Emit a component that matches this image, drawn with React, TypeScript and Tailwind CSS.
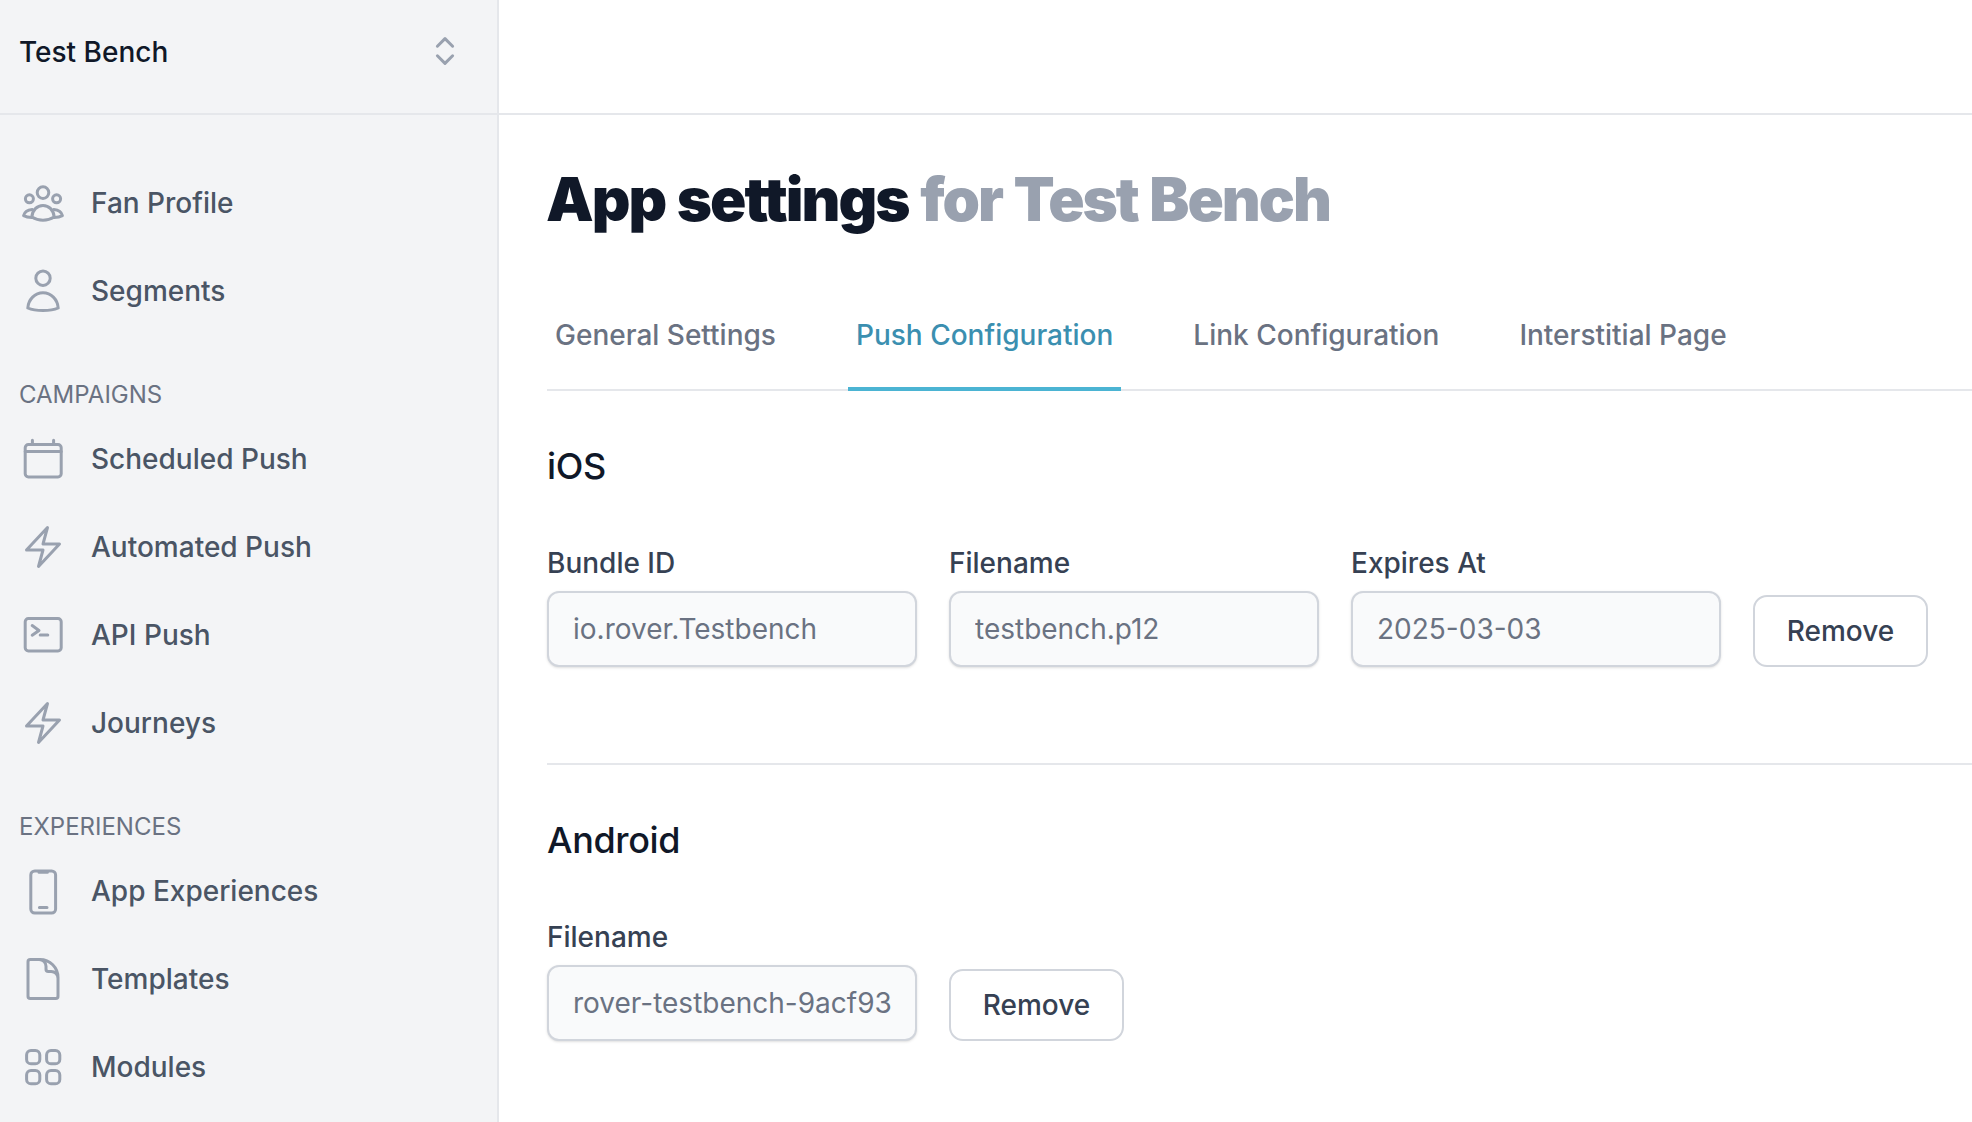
import type { ReactNode } from 'react'

function Icon({ children }: { children: ReactNode }) {
  return (
    <svg viewBox="0 0 24 24" fill="none" stroke="currentColor" strokeWidth={1.5} strokeLinecap="round" strokeLinejoin="round" className="w-12 h-12 text-gray-400 shrink-0">
      {children}
    </svg>
  )
}

const BOLT = <path d="M3.75 13.5l10.5-11.25L12 10.5h8.25L9.75 21.75 12 13.5H3.75z" />

const ICONS: Record<string, ReactNode> = {
  fans: (
    <>
      <circle cx="12" cy="6.8" r="2.9" />
      <circle cx="5.2" cy="9.9" r="2" />
      <circle cx="18.8" cy="9.9" r="2" />
      <path d="M12 13.2c-3 0-5.3 2.4-5.6 5.8 1.6 1 3.5 1.6 5.6 1.6s4-.6 5.6-1.6c-.3-3.4-2.6-5.8-5.6-5.8z" />
      <path d="M6.6 15.2c-2.2.2-3.9 1.3-4.3 3.1.9.5 2.3.9 4.1.9M17.4 15.2c2.2.2 3.9 1.3 4.3 3.1-.9.5-2.3.9-4.1.9" />
    </>
  ),
  user: (
    <>
      <circle cx="12" cy="5.6" r="3.6" />
      <path d="M12 12.9c-4 0-7.3 3.3-7.6 7.6 2.2 1 4.8 1.3 7.6 1.3s5.4-.3 7.6-1.3c-.3-4.3-3.6-7.6-7.6-7.6z" />
    </>
  ),
  calendar: (
    <>
      <rect x="3.1" y="4.8" width="18" height="16.2" rx="1.6" />
      <path d="M3.1 8.3h18M6.7 2.6v2.2M17.3 2.6v2.2" />
    </>
  ),
  bolt: BOLT,
  terminal: (
    <>
      <rect x="3.1" y="3.8" width="18" height="16.2" rx="1.6" />
      <path d="M6.6 7.3l3.4 2.4-3.4 2.4M10.6 12h3.8" />
    </>
  ),
  phone: (
    <>
      <rect x="5.9" y="2" width="12.4" height="21" rx="2" />
      <path d="M10 2.6h4.2M10.2 20.2h3.8" />
    </>
  ),
  file: (
    <>
      <path d="M19.5 14.25v-2.625a3.375 3.375 0 00-3.375-3.375h-1.5A1.125 1.125 0 0113.5 7.125v-1.5a3.375 3.375 0 00-3.375-3.375H8.25m2.25 0H5.625c-.621 0-1.125.504-1.125 1.125v17.25c0 .621.504 1.125 1.125 1.125h12.75c.621 0 1.125-.504 1.125-1.125V11.25a9 9 0 00-9-9z" />
    </>
  ),
  grid: (
    <>
      <rect x="3.8" y="3.8" width="6.6" height="6.6" rx="2.2" />
      <rect x="13.8" y="3.8" width="6.6" height="6.6" rx="2.2" />
      <rect x="3.8" y="13.8" width="6.6" height="6.6" rx="2.2" />
      <rect x="13.8" y="13.8" width="6.6" height="6.6" rx="2.2" />
    </>
  ),
}

function NavItem({ icon, label }: { icon: string; label: string }) {
  return (
    <a className="flex items-center h-[88px] pl-[19px] gap-6 text-[28px] font-medium text-gray-600">
      <Icon>{ICONS[icon]}</Icon>
      <span>{label}</span>
    </a>
  )
}

function NavLabel({ children }: { children: ReactNode }) {
  return <div className="mt-10 h-10 pl-[19px] flex items-center text-2xl text-gray-500">{children}</div>
}

function Field({ label, value }: { label: string; value: string }) {
  return (
    <label className="block w-[370px]">
      <span className="block text-[28px] leading-[40px] font-medium text-gray-700 mb-2">{label}</span>
      <input
        readOnly
        value={value}
        className="block w-full h-[76px] px-6 rounded-xl border-2 border-gray-300 bg-gray-50 shadow-sm text-[28px] text-gray-500 outline-none"
      />
    </label>
  )
}

function RemoveButton() {
  return (
    <button className="h-[72px] w-[175px] rounded-[14px] border-2 border-gray-300 bg-white text-[28px] font-medium text-gray-700">
      Remove
    </button>
  )
}

const TABS = ['General Settings', 'Push Configuration', 'Link Configuration', 'Interstitial Page']

export default function App() {
  return (
    <div className="flex h-[1122px] overflow-hidden bg-white font-[Inter,sans-serif]">
      <aside className="w-[499px] shrink-0 bg-gray-100 border-r-2 border-gray-200">
        <div className="h-[115px] border-b-2 border-gray-200 flex items-center justify-between pl-[19px] pr-[28px] pb-[10px]">
          <span className="text-[28px] font-medium text-gray-900">Test Bench</span>
          <svg viewBox="0 0 24 24" fill="none" stroke="currentColor" strokeWidth={1.5} strokeLinecap="round" strokeLinejoin="round" className="w-12 h-12 text-gray-400 mt-[-2px]">
            <path d="M8.2 9.6 12 5.8l3.8 3.8M8.2 14.4 12 18.2l3.8-3.8" />
          </svg>
        </div>
        <nav className="pt-[44px]">
          <NavItem icon="fans" label="Fan Profile" />
          <NavItem icon="user" label="Segments" />
          <NavLabel>CAMPAIGNS</NavLabel>
          <NavItem icon="calendar" label="Scheduled Push" />
          <NavItem icon="bolt" label="Automated Push" />
          <NavItem icon="terminal" label="API Push" />
          <NavItem icon="bolt" label="Journeys" />
          <NavLabel>EXPERIENCES</NavLabel>
          <NavItem icon="phone" label="App Experiences" />
          <NavItem icon="file" label="Templates" />
          <NavItem icon="grid" label="Modules" />
        </nav>
      </aside>

      <main className="flex-1 min-w-0">
        <div className="h-[115px] border-b-2 border-gray-200" />
        <div className="pl-12">
          <h1 className="mt-[48px] -ml-px text-[60px] leading-[72px] font-black tracking-[-0.033em] [word-spacing:1.5px] text-gray-900">
            App settings <span className="text-gray-400">for Test Bench</span>
          </h1>

          <div className="mt-[60px] flex gap-[64px] h-[96px] border-b-2 border-gray-200">
            {TABS.map((tab) => (
              <a
                key={tab}
                className={
                  tab === 'Push Configuration'
                    ? 'h-[96px] px-2 pt-[20px] border-b-4 border-[#4bb4d3] text-[28px] leading-[40px] font-medium text-[#3b8fb0]'
                    : 'h-[96px] px-2 pt-[20px] text-[28px] leading-[40px] font-medium text-gray-500'
                }
              >
                {tab}
              </a>
            ))}
          </div>

          <section className="border-b-2 border-gray-200 h-[374px] pt-[51px]">
            <h2 className="text-4xl leading-[48px] font-medium tracking-[-0.01em] text-gray-900">iOS</h2>
            <div className="mt-[53px] flex items-end gap-8">
              <Field label="Bundle ID" value="io.rover.Testbench" />
              <Field label="Filename" value="testbench.p12" />
              <Field label="Expires At" value="2025-03-03" />
              <RemoveButton />
            </div>
          </section>

          <section className="pt-[51px]">
            <h2 className="text-4xl leading-[48px] font-medium tracking-[-0.01em] text-gray-900">Android</h2>
            <div className="mt-[53px] flex items-end gap-8">
              <Field label="Filename" value="rover-testbench-9acf93" />
              <RemoveButton />
            </div>
          </section>
        </div>
      </main>
    </div>
  )
}
